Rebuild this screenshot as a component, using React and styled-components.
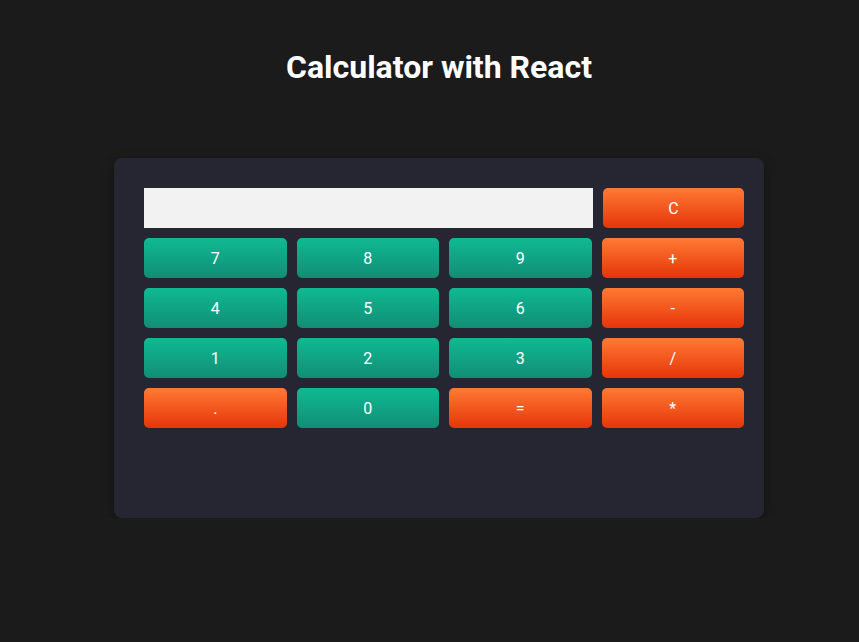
import React, { useState } from 'react';
import styled, { createGlobalStyle } from 'styled-components';

const GlobalStyle = createGlobalStyle`
  html, body {
    margin: 0;
    padding: 0;
    background: #1b1b1b;
    font-family: Roboto, "Liberation Sans", sans-serif;
  }
`;

const Page = styled.div`
  display: flex;
  flex-direction: column;
  align-items: center;
  padding: 48px 0 0 19px;
`;

const Title = styled.h1`
  margin: 0;
  color: #ffffff;
  font-size: 32px;
  font-weight: 700;
  line-height: 38px;
`;

const Card = styled.div`
  margin-top: 72px;
  width: 650px;
  height: 360px;
  box-sizing: border-box;
  padding: 30px 20px 30px 30px;
  background: #262633;
  border-radius: 8px;
  box-shadow: 0 4px 12px rgba(0, 0, 0, 0.35);
  display: flex;
  flex-direction: column;
  gap: 10px;
`;

const TopRow = styled.div`
  display: flex;
  gap: 10px;
`;

const Display = styled.input`
  flex: 1;
  min-width: 0;
  height: 40px;
  box-sizing: border-box;
  border: none;
  outline: none;
  background: #f2f2f2;
  padding: 0 10px;
  font-family: inherit;
  font-size: 18px;
`;

const Grid = styled.div`
  display: grid;
  grid-template-columns: repeat(4, 1fr);
  gap: 10px;
`;

const Key = styled.button`
  height: 40px;
  width: ${(p) => (p.$wide ? '141px' : 'auto')};
  flex-shrink: 0;
  border: none;
  border-radius: 5px;
  color: #ffffff;
  font-family: inherit;
  font-size: 16px;
  cursor: pointer;
  background: ${(p) =>
    p.$op
      ? 'linear-gradient(180deg, #ff7a33 0%, #e6350a 100%)'
      : 'linear-gradient(180deg, #0fba93 0%, #128d76 100%)'};
`;

const keys = [
  ['7'], ['8'], ['9'], ['+', true],
  ['4'], ['5'], ['6'], ['-', true],
  ['1'], ['2'], ['3'], ['/', true],
  ['.', true], ['0'], ['=', true], ['*', true],
];

export default function App() {
  const [value, setValue] = useState('');

  const press = (k) => {
    if (k === '=') {
      try {
        // eslint-disable-next-line no-new-func
        setValue(String(Function(`return (${value})`)()));
      } catch (e) {
        setValue('Error');
      }
      return;
    }
    setValue(value + k);
  };

  return (
    <>
      <GlobalStyle />
      <Page>
        <Title>Calculator with React</Title>
        <Card>
          <TopRow>
            <Display value={value} readOnly />
            <Key $op $wide onClick={() => setValue('')}>C</Key>
          </TopRow>
          <Grid>
            {keys.map(([k, op]) => (
              <Key key={k} $op={op} onClick={() => press(k)}>
                {k}
              </Key>
            ))}
          </Grid>
        </Card>
      </Page>
    </>
  );
}
